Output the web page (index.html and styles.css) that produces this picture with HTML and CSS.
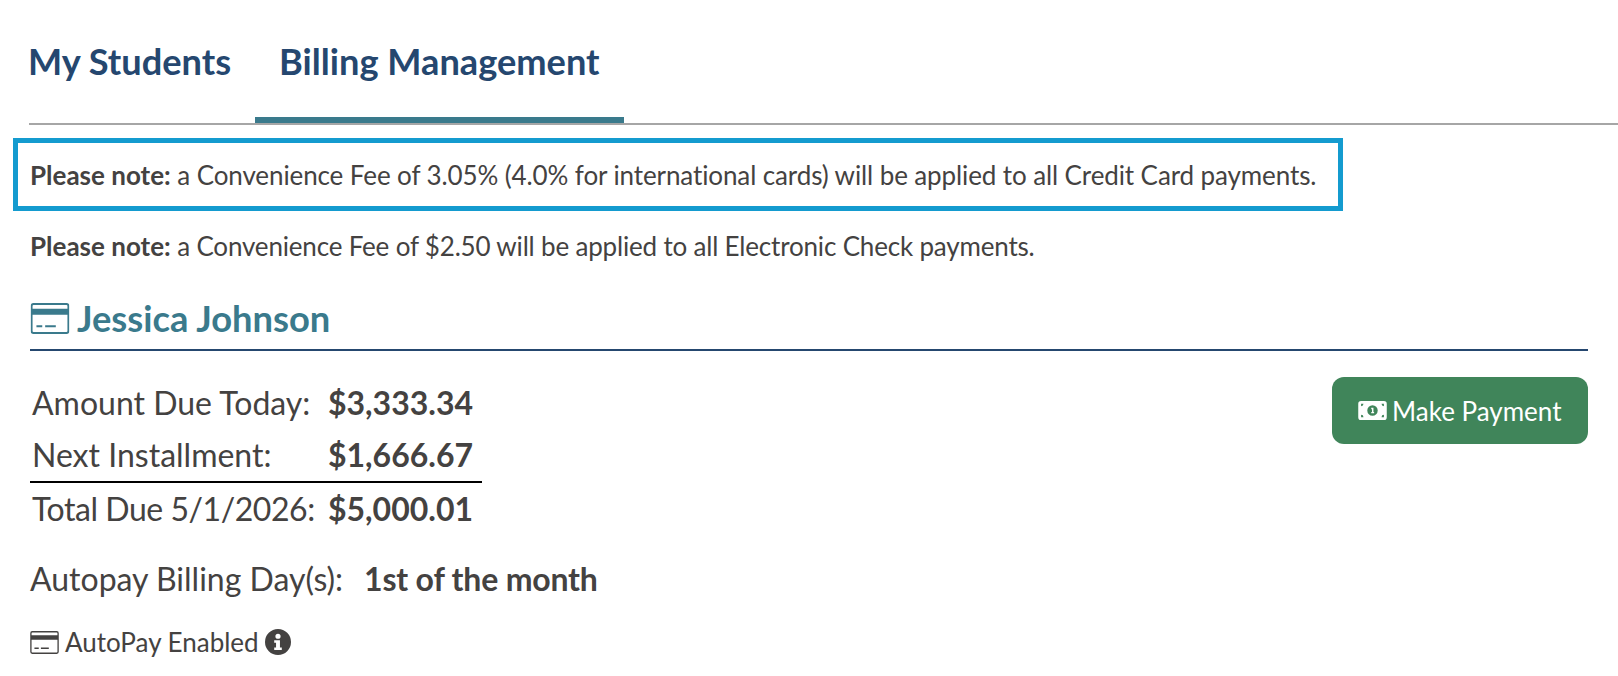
FILE: index.html
```html
<!DOCTYPE html>
<html>
  <head>
    <title>Billing Management</title>
    <link rel="stylesheet" href="styles.css">
  </head>
  <body>
    <div class="tabs">
      <a class="tab">My Students</a>
      <a class="tab active">Billing Management</a>
    </div>

    <div class="note note-boxed"><b>Please note:</b> a Convenience Fee of 3.05% (4.0% for international cards) will be applied to all Credit Card payments.</div>
    <div class="note note-check"><b>Please note:</b> a Convenience Fee of $2.50 will be applied to all Electronic Check payments.</div>

    <div class="account">
      <h2 class="student-name">
        <svg class="card-icon" viewBox="0 0 40 32"><use href="#card"></use></svg>
        Jessica Johnson
      </h2>

      <div class="account-body">
        <div class="balances">
          <div class="balance-row"><span>Amount Due Today:</span><b>$3,333.34</b></div>
          <div class="balance-row balance-last"><span>Next Installment:</span><b>$1,666.67</b></div>
          <div class="balance-row balance-total"><span>Total Due 5/1/2026:</span><b>$5,000.01</b></div>
        </div>
        <button class="pay-button">
          <svg class="money-icon" viewBox="0 0 30 20">
            <path fill-rule="evenodd" d="M3 0H27A3 3 0 0 1 30 3V17A3 3 0 0 1 27 20H3A3 3 0 0 1 0 17V3A3 3 0 0 1 3 0ZM15 4.500A5.500 5.500 0 1 0 15 15.500A5.500 5.500 0 1 0 15 4.500ZM3 3V5.500A2.500 2.500 0 0 0 5.500 3ZM24.500 3A2.500 2.500 0 0 0 27 5.500V3ZM3 14.500V17H5.500A2.500 2.500 0 0 0 3 14.500ZM27 14.500A2.500 2.500 0 0 0 24.500 17H27ZM13.700 7.200V8.700H14.500V11.500H13.700V13H16.700V11.500H16V7.200Z"></path>
          </svg>
          Make Payment
        </button>
      </div>

      <div class="autopay-day"><span>Autopay Billing Day(s):</span><b>1st of the month</b></div>

      <div class="autopay-status">
        <svg class="card-icon-small" viewBox="0 0 40 32"><use href="#card"></use></svg>
        AutoPay Enabled
        <svg class="info-icon" viewBox="0 0 24 24">
          <path fill-rule="evenodd" d="M12 0A12 12 0 1 1 12 24A12 12 0 1 1 12 0ZM12 4.300A2.400 2.400 0 1 0 12 9.100A2.400 2.400 0 1 0 12 4.300ZM8.500 10.300V12.600H10.200V17H8.500V19.300H15.500V17H13.800V10.300Z"></path>
        </svg>
      </div>
    </div>

    <svg class="icon-defs">
      <symbol id="card" viewBox="0 0 40 32">
        <path fill-rule="evenodd" d="M3 0H37A3 3 0 0 1 40 3V29A3 3 0 0 1 37 32H3A3 3 0 0 1 0 29V3A3 3 0 0 1 3 0ZM3 2A1 1 0 0 0 2 3V6H38V3A1 1 0 0 0 37 2ZM2 12V29A1 1 0 0 0 3 30H37A1 1 0 0 0 38 29V12ZM6 23H12V25H6ZM15 23H26V25H15Z"></path>
      </symbol>
    </svg>
  </body>
</html>
```

FILE: styles.css
```css
body {
  margin: 0;
  padding-left: 13px;
  font-family: Lato, sans-serif;
  font-variant-ligatures: none;
  color: #444241;
  background: #fff;
}

b {
  font-weight: 700;
  letter-spacing: 0;
}

.tabs {
  display: flex;
  margin-left: 16px;
  border-bottom: 2px solid #a6a6a6;
}

.tab {
  padding: 5px 24px 0;
  font-size: 36.200px;
  font-weight: 700;
  line-height: 112px;
  color: #25476f;
  border-bottom: 6px solid transparent;
}

.tab:first-child {
  margin-left: -1px;
  padding-left: 0;
}

.tab.active {
  border-bottom-color: #3a7a8c;
}

.note {
  margin: 18px 0 0 17px;
  font-size: 26px;
  line-height: 34px;
  letter-spacing: -0.105px;
}

.note-check {
  letter-spacing: -0.180px;
}

.note-boxed {
  box-sizing: border-box;
  width: 1330px;
  margin: 13px 0 0;
  padding: 14.500px 0 14.500px 12px;
  border: 5px solid #149bcf;
}

.account {
  margin: 33px 30px 0 17px;
}

.student-name {
  display: flex;
  align-items: center;
  gap: 7px;
  margin: 0;
  padding-bottom: 9px;
  font-size: 36.300px;
  font-weight: 700;
  line-height: 44px;
  color: #3a7a8c;
  border-bottom: 2px solid #25476f;
}

.card-icon {
  width: 40px;
  height: 31px;
  fill: #3a7a8c;
}

.account-body {
  display: flex;
  justify-content: space-between;
  align-items: flex-start;
  margin-top: 26px;
}

.balances {
  width: 452px;
  font-size: 32px;
}

.balance-row {
  display: grid;
  grid-template-columns: 296px auto;
  padding-left: 2px;
  line-height: 52px;
}

.balance-last {
  border-bottom: 2px solid #000;
}

.balance-total span {
  letter-spacing: -0.450px;
}

.pay-button {
  display: flex;
  align-items: center;
  gap: 5px;
  height: 67px;
  width: 256px;
  padding: 0 0 0 26px;
  border: none;
  border-radius: 12px;
  background: #40855a;
  color: #fff;
  font-family: inherit;
  font-size: 26px;
}

.money-icon {
  width: 29px;
  height: 19px;
  fill: #fff;
}

.autopay-day {
  display: flex;
  gap: 21px;
  margin-top: 22px;
  font-size: 32px;
  line-height: 44px;
}

.autopay-day b {
  letter-spacing: -0.200px;
}

.autopay-status {
  display: flex;
  align-items: center;
  gap: 6px;
  margin-top: 23px;
  font-size: 26px;
  line-height: 36px;
}

.card-icon-small {
  width: 29px;
  height: 23px;
  fill: #444241;
}

.info-icon {
  width: 26px;
  height: 26px;
  fill: #444241;
}

.icon-defs {
  display: none;
}
```
